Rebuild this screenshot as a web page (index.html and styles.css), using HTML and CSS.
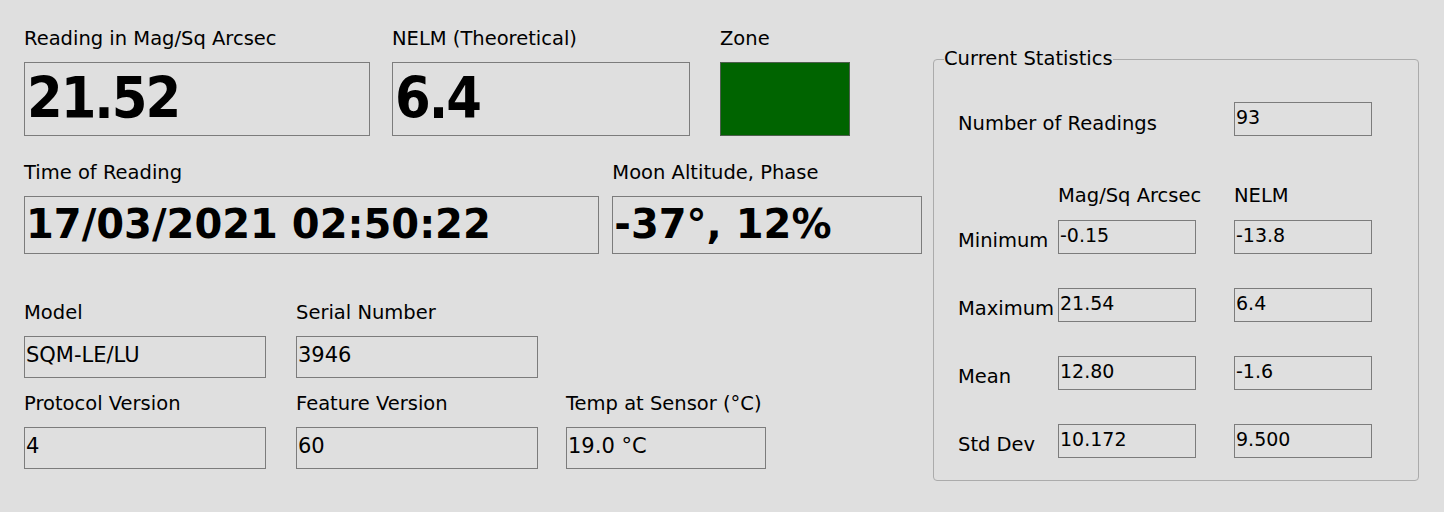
FILE: index.html
```html
<!DOCTYPE html>
<html lang="en">
<head>
    <meta charset="UTF-8">
    <title>SQM Reading</title>
    <link rel="stylesheet" href="styles.css">
</head>
<body>
    <div class="main">
        <div class="left">
            <div class="row row-top">
                <div class="field w-reading">
                    <div class="label">Reading in Mag/Sq Arcsec</div>
                    <div class="box big">21.52</div>
                </div>
                <div class="field w-nelm">
                    <div class="label">NELM (Theoretical)</div>
                    <div class="box big">6.4</div>
                </div>
                <div class="field w-zone">
                    <div class="label">Zone</div>
                    <div class="box zone"></div>
                </div>
            </div>

            <div class="row row-time">
                <div class="field w-time">
                    <div class="label">Time of Reading</div>
                    <div class="box mid">17/03/2021 02:50:22</div>
                </div>
                <div class="field w-moon">
                    <div class="label">Moon Altitude, Phase</div>
                    <div class="box mid">-37°, 12%</div>
                </div>
            </div>

            <div class="row row-info">
                <div class="field w-small">
                    <div class="label">Model</div>
                    <div class="box small">SQM-LE/LU</div>
                </div>
                <div class="field w-small">
                    <div class="label">Serial Number</div>
                    <div class="box small">3946</div>
                </div>
            </div>

            <div class="row row-ver">
                <div class="field w-small">
                    <div class="label">Protocol Version</div>
                    <div class="box small">4</div>
                </div>
                <div class="field w-small">
                    <div class="label">Feature Version</div>
                    <div class="box small">60</div>
                </div>
                <div class="field w-temp">
                    <div class="label">Temp at Sensor (°C)</div>
                    <div class="box small">19.0 °C</div>
                </div>
            </div>
        </div>

        <fieldset class="stats">
            <legend>Current Statistics</legend>
            <div class="stat-row count-row">
                <div class="stat-name wide">Number of Readings</div>
                <div class="stat-box">93</div>
            </div>
            <div class="stat-head">
                <div class="stat-name"></div>
                <div class="col-head">Mag/Sq Arcsec</div>
                <div class="col-head">NELM</div>
            </div>
            <div class="stat-row">
                <div class="stat-name">Minimum</div>
                <div class="stat-box first">-0.15</div>
                <div class="stat-box">-13.8</div>
            </div>
            <div class="stat-row">
                <div class="stat-name">Maximum</div>
                <div class="stat-box first">21.54</div>
                <div class="stat-box">6.4</div>
            </div>
            <div class="stat-row">
                <div class="stat-name">Mean</div>
                <div class="stat-box first">12.80</div>
                <div class="stat-box">-1.6</div>
            </div>
            <div class="stat-row">
                <div class="stat-name">Std Dev</div>
                <div class="stat-box first">10.172</div>
                <div class="stat-box">9.500</div>
            </div>
        </fieldset>
    </div>
</body>
</html>
```

FILE: styles.css
```css
body {
    margin: 0;
    background-color: #dfdfdf;
    font-family: "DejaVu Sans", sans-serif;
    color: #000;
}

.main {
    display: flex;
    align-items: flex-start;
}

.left {
    padding: 26px 0 0 24px;
    width: 898px;
}

.row {
    display: flex;
}

.row-top {
    gap: 22px;
}

.row-time {
    margin-top: 24px;
    gap: 13px;
}

.row-info {
    margin-top: 46px;
    gap: 30px;
}

.row-ver {
    margin-top: 13px;
    gap: 30px;
}

.row-ver .w-temp {
    margin-left: -2px;
}

.field {
    display: flex;
    flex-direction: column;
}

.label {
    font-size: 19.5px;
    line-height: 24px;
    padding-top: 1px;
    margin-bottom: 11px;
    white-space: nowrap;
}

.box {
    box-sizing: border-box;
    border: 1px solid #7c7c7c;
    white-space: nowrap;
    overflow: hidden;
}

.w-reading { width: 346px; }
.w-nelm { width: 298px; }
.w-zone { width: 130px; margin-left: 8px; }
.w-time { width: 576px; }
.w-moon { width: 310px; }
.w-small { width: 242px; }
.w-temp { width: 200px; }

.big {
    height: 74px;
    font-family: "DejaVu Sans Condensed", "DejaVu Sans", sans-serif;
    font-size: 57px;
    font-weight: bold;
    letter-spacing: -2px;
    line-height: 70px;
    padding-left: 2px;
}

.zone {
    height: 74px;
    background-color: #006400;
    border-color: #4d5e4d;
}

.mid {
    height: 58px;
    font-size: 40px;
    font-weight: bold;
    line-height: 54px;
    padding-left: 1px;
}

.small {
    height: 42px;
    font-size: 21px;
    line-height: 36px;
    padding-left: 1px;
}

/* Statistik-Rahmen */
.stats {
    margin: 59px 0 0 11px;
    width: 486px;
    height: 422px;
    box-sizing: border-box;
    border: 1px solid #ababab;
    border-radius: 4px;
    padding: 42px 0 0 24px;
    position: relative;
}

.stats legend {
    position: absolute;
    top: -12px;
    left: 10px;
    padding: 0;
    font-size: 19.5px;
    line-height: 22px;
    background-color: #dfdfdf;
}

.stat-row,
.stat-head {
    display: flex;
    align-items: flex-start;
}

.stat-row {
    margin-bottom: 34px;
}

.count-row {
    margin-bottom: 48px;
}

.stat-head {
    margin-bottom: 12px;
    height: 24px;
}

.stat-name {
    width: 100px;
    font-size: 19.5px;
    line-height: 24px;
    padding-top: 9px;
    white-space: nowrap;
}

.stat-name.wide {
    width: 276px;
    padding-top: 10px;
}

.col-head {
    width: 176px;
    font-size: 19.5px;
    line-height: 24px;
}

.stat-head .stat-name {
    padding-top: 0;
}

.stat-box {
    box-sizing: border-box;
    width: 138px;
    height: 34px;
    border: 1px solid #7c7c7c;
    font-size: 19px;
    line-height: 28px;
    padding-left: 1px;
}

.stat-box.first {
    margin-right: 38px;
}
```
